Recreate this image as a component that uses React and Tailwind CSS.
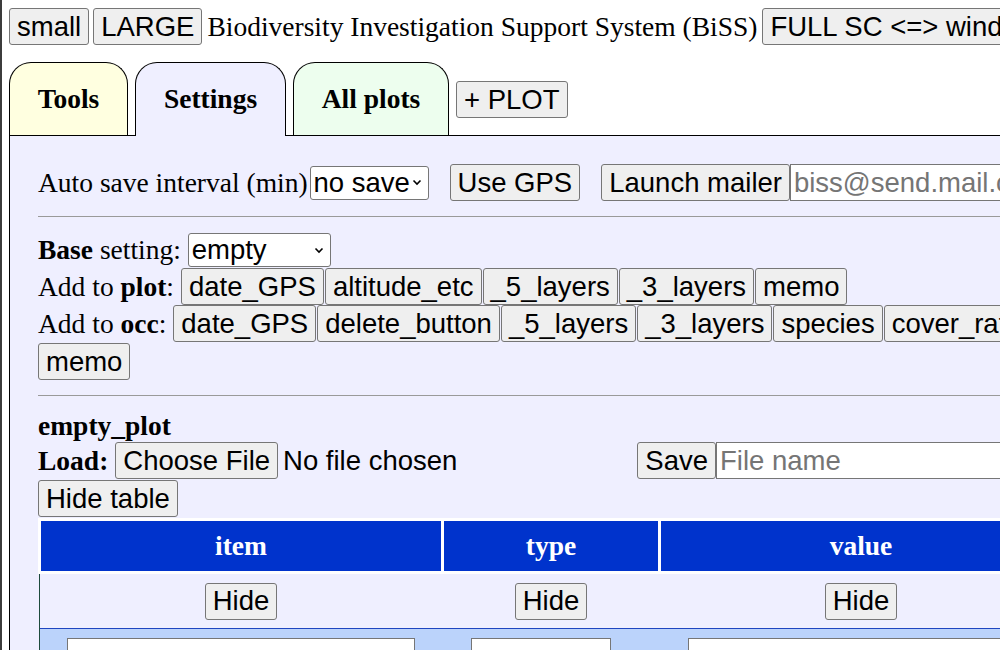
import React from 'react';

const Btn = ({ children, className = '' }) => (
  <button className={`h-[37px] px-[7px] bg-[#efefef] border border-[#767676] rounded-[3px] font-['Liberation_Sans',sans-serif] text-[27.5px] leading-none text-black whitespace-nowrap shrink-0 ${className}`}>
    {children}
  </button>
);

const Chevron = () => (
  <svg width="10" height="7" viewBox="0 0 10 7" className="shrink-0">
    <path d="M1.5 1.5 L5 5 L8.5 1.5" fill="none" stroke="#000" strokeWidth="1.6" />
  </svg>
);

const FakeSelect = ({ value, className = '' }) => (
  <div className={`h-[34px] bg-white border border-[#767676] rounded-[3px] flex items-center justify-between pl-[3px] pr-[6px] font-['Liberation_Sans',sans-serif] text-[27.5px] leading-none shrink-0 ${className}`}>
    <span>{value}</span>
    <Chevron />
  </div>
);

const TextBox = ({ placeholder, className = '' }) => (
  <input
    placeholder={placeholder}
    className={`h-[37px] bg-white border border-[#767676] px-[3px] font-['Liberation_Sans',sans-serif] text-[27.5px] leading-none placeholder:text-[#757575] shrink-0 ${className}`}
  />
);

export default function App() {
  return (
    <div className="w-[1000px] h-[650px] overflow-hidden bg-white border-l-2 border-[#3c3c3c] font-['Liberation_Serif',serif] text-[27.5px] leading-none text-black">
      <div className="pl-[7px] pt-[8px] w-[1200px]">
        {/* top bar */}
        <div className="flex items-center gap-[4px] whitespace-nowrap">
          <Btn>small</Btn>
          <Btn>LARGE</Btn>
          <span className="px-[1px]">Biodiversity Investigation Support System (BiSS)</span>
          <Btn>FULL SC &lt;=&gt; window</Btn>
        </div>

        {/* tabs */}
        <div className="mt-[17px] flex items-end gap-[7px]">
          <div className="w-[119px] h-[73px] border border-black border-b-0 rounded-t-[22px] bg-[#ffffe0] flex items-center justify-center font-bold">
            Tools
          </div>
          <div className="relative z-10 -mb-px w-[151px] h-[74px] pb-px border border-black border-b-0 rounded-t-[22px] bg-[#efefff] flex items-center justify-center font-bold">
            Settings
          </div>
          <div className="w-[156px] h-[73px] border border-black border-b-0 rounded-t-[22px] bg-[#edfeee] flex items-center justify-center font-bold">
            All plots
          </div>
          <Btn className="mb-[17px] h-[36px]">+ PLOT</Btn>
        </div>

        {/* settings panel */}
        <div className="border border-black bg-[#efefff] pl-[28px] pt-[28px] pb-[40px] whitespace-nowrap">
          <div className="flex items-center h-[37px]">
            <span>Auto save interval (min)</span>
            <FakeSelect value="no save" className="ml-[2px] w-[119px]" />
            <Btn className="ml-[21px]">Use GPS</Btn>
            <Btn className="ml-[21px]">Launch mailer</Btn>
            <TextBox placeholder="biss@send.mail.com" className="w-[320px]" />
          </div>

          <div className="mt-[15px] border-t border-[#9a9a9a]" />

          <div className="mt-[15px] flex items-center h-[36px]">
            <span>
              <b>Base</b> setting:&nbsp;
            </span>
            <FakeSelect value="empty" className="w-[143px] h-[33px]" />
          </div>

          <div className="flex items-center h-[37px] gap-px">
            <span className="mr-[6px]">
              Add to <b>plot</b>:
            </span>
            <Btn>date_GPS</Btn>
            <Btn>altitude_etc</Btn>
            <Btn>_5_layers</Btn>
            <Btn>_3_layers</Btn>
            <Btn>memo</Btn>
          </div>

          <div className="flex items-center h-[37px] gap-px">
            <span className="mr-[6px]">
              Add to <b>occ</b>:
            </span>
            <Btn>date_GPS</Btn>
            <Btn>delete_button</Btn>
            <Btn>_5_layers</Btn>
            <Btn>_3_layers</Btn>
            <Btn>species</Btn>
            <Btn>cover_rate</Btn>
          </div>

          <div className="flex items-center h-[37px] mt-px">
            <Btn>memo</Btn>
          </div>

          <div className="mt-[15px] border-t border-[#9a9a9a]" />

          <div className="mt-[14px] h-[32px] flex items-center font-bold">empty_plot</div>

          <div className="flex items-center h-[37px]">
            <b className="mr-[7px]">Load:</b>
            <Btn>Choose File</Btn>
            <span className="ml-[5px] font-['Liberation_Sans',sans-serif]">No file chosen</span>
            <Btn className="ml-[180px]">Save</Btn>
            <TextBox placeholder="File name" className="w-[320px]" />
          </div>

          <div className="flex items-center h-[37px] mt-px">
            <Btn>Hide table</Btn>
          </div>

          {/* table */}
          <div className="mt-px">
            <div className="bg-white p-[3px] pr-0 flex gap-[3px] w-[1100px]">
              <div className="w-[400px] h-[50px] bg-[#0033cc] text-white font-bold flex items-center justify-center">item</div>
              <div className="w-[214px] h-[50px] bg-[#0033cc] text-white font-bold flex items-center justify-center">type</div>
              <div className="w-[400px] h-[50px] bg-[#0033cc] text-white font-bold flex items-center justify-center">value</div>
            </div>
            <div className="ml-px border-l border-[#1d4a3c]">
              <div className="h-[54px] pl-px flex gap-[3px] items-center">
                <div className="w-[400px] flex justify-center"><Btn>Hide</Btn></div>
                <div className="w-[214px] flex justify-center"><Btn>Hide</Btn></div>
                <div className="w-[400px] flex justify-center"><Btn>Hide</Btn></div>
              </div>
              <div className="h-[60px] border-t border-[#1f45c0] bg-[#bbd3fb] pl-px flex gap-[3px] items-start pt-[9px]">
                <div className="w-[400px] pl-[26px]">
                  <div className="w-[348px] h-[37px] bg-white border border-[#767676]" />
                </div>
                <div className="w-[214px] pl-[27px]">
                  <div className="w-[140px] h-[37px] bg-white border border-[#767676]" />
                </div>
                <div className="w-[400px] pl-[27px]">
                  <div className="w-[360px] h-[37px] bg-white border border-[#767676]" />
                </div>
              </div>
            </div>
          </div>
        </div>
      </div>
    </div>
  );
}
